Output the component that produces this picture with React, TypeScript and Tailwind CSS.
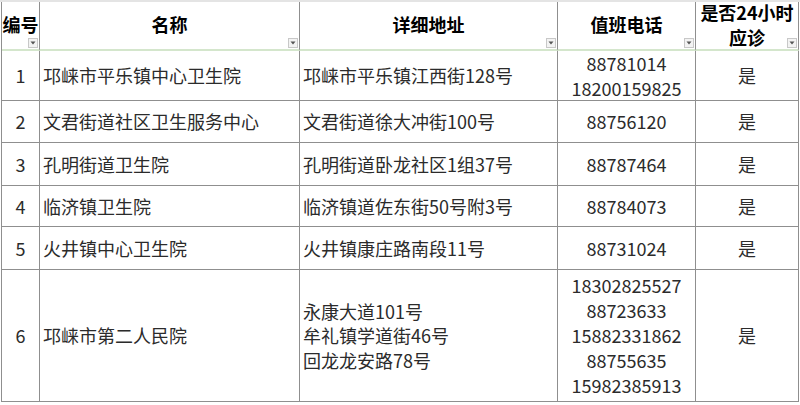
import React from 'react';

type Row = {
  no: string;
  name: string;
  addr: string[];
  phones: string[];
  h: string;
};

const rows: Row[] = [
  { no: '1', name: '邛崃市平乐镇中心卫生院', addr: ['邛崃市平乐镇江西街128号'], phones: ['88781014', '18200159825'], h: 'h-[50px]' },
  { no: '2', name: '文君街道社区卫生服务中心', addr: ['文君街道徐大冲街100号'], phones: ['88756120'], h: 'h-[42px]' },
  { no: '3', name: '孔明街道卫生院', addr: ['孔明街道卧龙社区1组37号'], phones: ['88787464'], h: 'h-[43px]' },
  { no: '4', name: '临济镇卫生院', addr: ['临济镇道佐东街50号附3号'], phones: ['88784073'], h: 'h-[41px]' },
  { no: '5', name: '火井镇中心卫生院', addr: ['火井镇康庄路南段11号'], phones: ['88731024'], h: 'h-[43px]' },
  {
    no: '6',
    name: '邛崃市第二人民院',
    addr: ['永康大道101号', '牟礼镇学道街46号', '回龙龙安路78号'],
    phones: ['18302825527', '88723633', '15882331862', '88755635', '15982385913'],
    h: 'h-[132px]',
  },
];

function FilterBtn() {
  return (
    <span className="absolute right-[1px] bottom-[1px] w-[10px] h-[10px] border border-[#c8c8c8] bg-[#f3f3f3] flex items-center justify-center">
      <svg width="6" height="4" viewBox="0 0 6 4">
        <path d="M0.5 0.5 L5.5 0.5 L3 3.5 Z" fill="#555" />
      </svg>
    </span>
  );
}

const cell = 'border-r border-b border-[#8f8f8f] flex items-center';

export default function App() {
  return (
    <div
      className="w-[800px] h-[405px] bg-white overflow-hidden text-[18px] text-[#2b2b2b]"
      style={{ fontFamily: '"Noto Sans CJK SC", "Noto Sans", sans-serif' }}
    >
      <div className="h-[2px] bg-[#e4e4e4]" />
      <div className="ml-[1px] w-[797px] border-l border-[#8f8f8f] grid grid-cols-[38px_260px_258px_138px_103px]">
        {/* header */}
        {[
          ['编号'],
          ['名称'],
          ['详细地址'],
          ['值班电话'],
          ['是否24小时', '应诊'],
        ].map((lines, i) => (
          <div
            key={i}
            className="relative h-[49px] border-r border-[#8f8f8f] border-b-2 border-b-[#d4e6cc] flex flex-col items-center justify-center font-bold text-black leading-[25px] pb-[2px]"
          >
            {lines.map(l => (
              <span key={l} className="whitespace-nowrap">{l}</span>
            ))}
            <FilterBtn />
          </div>
        ))}

        {rows.map(r => (
          <React.Fragment key={r.no}>
            <div className={`${cell} ${r.h} justify-center`}>{r.no}</div>
            <div className={`${cell} ${r.h} pl-[3px] whitespace-nowrap`}>{r.name}</div>
            <div className={`${cell} ${r.h} pl-[3px]`}>
              <div className="flex flex-col leading-[24.5px] whitespace-nowrap">
                {r.addr.map(a => (
                  <span key={a}>{a}</span>
                ))}
              </div>
            </div>
            <div className={`${cell} ${r.h} justify-center`}>
              <div className="flex flex-col items-center leading-[25px]">
                {r.phones.map(p => (
                  <span key={p}>{p}</span>
                ))}
              </div>
            </div>
            <div className={`${cell} ${r.h} justify-center`}>是</div>
          </React.Fragment>
        ))}
      </div>
    </div>
  );
}
